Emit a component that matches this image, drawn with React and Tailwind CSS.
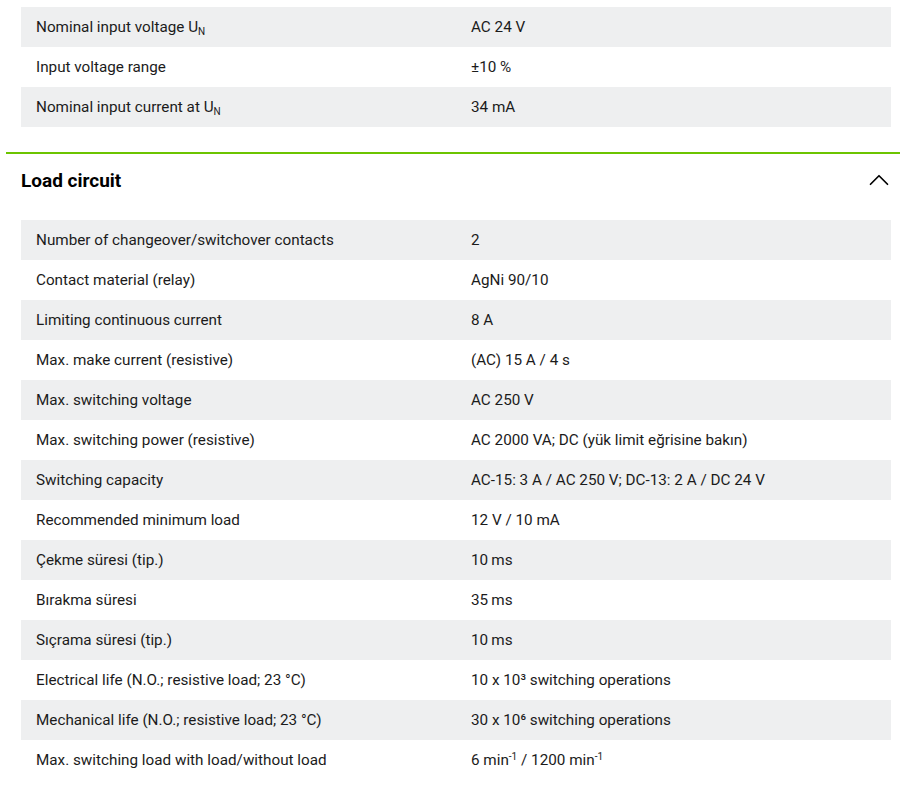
import { ChevronUp } from 'lucide-react';

const inputRows = [
  [<>Nominal input voltage U<sub className="text-[10px]">N</sub></>, 'AC 24 V'],
  ['Input voltage range', '±10 %'],
  [<>Nominal input current at U<sub className="text-[10px]">N</sub></>, '34 mA'],
];

const loadRows = [
  ['Number of changeover/switchover contacts', '2'],
  ['Contact material (relay)', 'AgNi 90/10'],
  ['Limiting continuous current', '8 A'],
  ['Max. make current (resistive)', '(AC) 15 A / 4 s'],
  ['Max. switching voltage', 'AC 250 V'],
  ['Max. switching power (resistive)', 'AC 2000 VA; DC (yük limit eğrisine bakın)'],
  ['Switching capacity', 'AC-15: 3 A / AC 250 V; DC-13: 2 A / DC 24 V'],
  ['Recommended minimum load', '12 V / 10 mA'],
  ['Çekme süresi (tip.)', '10\u2009ms'],
  ['Bırakma süresi', '35\u2009ms'],
  ['Sıçrama süresi (tip.)', '10\u2009ms'],
  ['Electrical life (N.O.; resistive load; 23 °C)', '10 x 10³ switching operations'],
  ['Mechanical life (N.O.; resistive load; 23 °C)', '30 x 10⁶ switching operations'],
  [
    'Max. switching load with load/without load',
    <>6 min<sup className="text-[10px]">-1</sup> / 1200 min<sup className="text-[10px]">-1</sup></>,
  ],
];

function SpecTable({ rows }) {
  return (
    <div className="mx-[21px] w-[870px]">
      {rows.map(([label, value], i) => (
        <div
          key={i}
          className={`grid grid-cols-2 h-10 items-center pt-px ${i % 2 === 0 ? 'bg-[#eeeff0]' : 'bg-white'}`}
        >
          <div className="px-[15px]">{label}</div>
          <div className="px-[15px]">{value}</div>
        </div>
      ))}
    </div>
  );
}

export default function App() {
  return (
    <div
      className="w-[900px] h-[792px] bg-white text-[#1b1b1b] text-[15.25px] overflow-hidden"
      style={{ fontFamily: 'Roboto, "Noto Sans", sans-serif' }}
    >
      <div className="pt-[7px]">
        <SpecTable rows={inputRows} />
      </div>
      <div className="mt-[25px] ml-[6px] h-[2px] bg-[#6cc400]" />
      <div className="flex items-center justify-between h-[54px] pl-[21px] pr-[4px]">
        <h2 className="text-[19px] font-bold text-black">Load circuit</h2>
        <ChevronUp size={34} strokeWidth={1.2} className="text-black -mt-[2px]" />
      </div>
      <div className="mt-[12px]">
        <SpecTable rows={loadRows} />
      </div>
    </div>
  );
}
